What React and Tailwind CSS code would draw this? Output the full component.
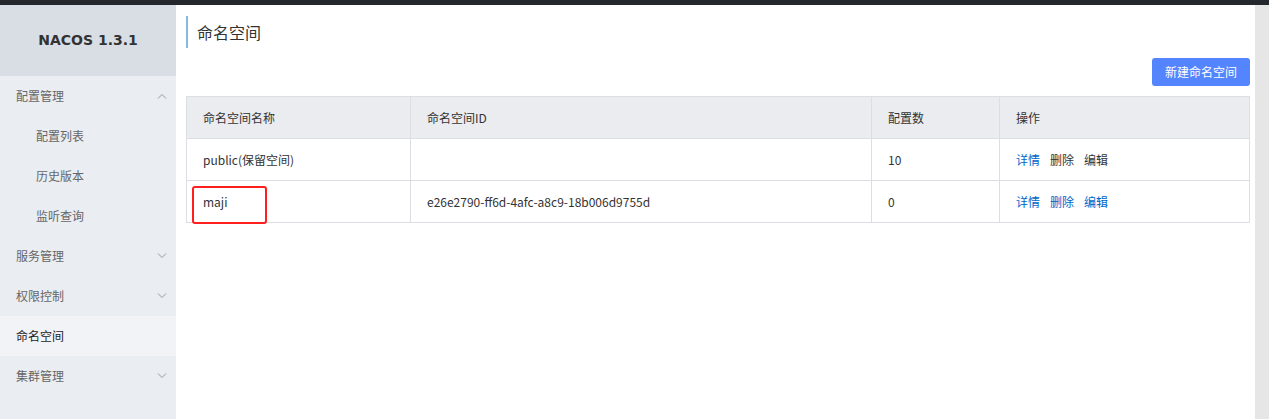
import * as React from "react";

const FONT = { fontFamily: '"Noto Sans CJK SC", "Noto Sans", sans-serif' };

const Chevron = ({ up }) => (
  <svg width="10" height="6" viewBox="0 0 10 6" className="text-[#999]">
    <path
      d={up ? "M1 5.5 L5 1.5 L9 5.5" : "M1 0.5 L5 4.5 L9 0.5"}
      fill="none"
      stroke="currentColor"
      strokeWidth="1"
    />
  </svg>
);

const menu = [
  { label: "配置管理", chevron: "up" },
  { label: "配置列表", sub: true },
  { label: "历史版本", sub: true },
  { label: "监听查询", sub: true },
  { label: "服务管理", chevron: "down" },
  { label: "权限控制", chevron: "down" },
  { label: "命名空间", active: true },
  { label: "集群管理", chevron: "down" },
];

const rows = [
  { name: "public(保留空间)", id: "", count: "10", del: false },
  { name: "maji", id: "e26e2790-ff6d-4afc-a8c9-18b006d9755d", count: "0", del: true, mark: true },
];

export default function App() {
  return (
    <div className="w-[1269px] h-[419px] overflow-hidden flex flex-col bg-white" style={FONT}>
      <div className="h-[5px] bg-[#24272c] shrink-0" />
      <div className="flex flex-1 min-h-0">
        <aside className="w-[176px] shrink-0 bg-[#eaedf1] flex flex-col">
          <div className="h-[71px] bg-[#d9dee4] flex items-center justify-center text-[15px] font-bold text-[#333]" style={{ fontFamily: '"DejaVu Sans", sans-serif', fontSize: 14 }}>
            NACOS 1.3.1
          </div>
          {menu.map((m) => (
            <div
              key={m.label}
              className={`h-[40px] flex items-center justify-between pr-[9px] text-[12px] ${
                m.sub ? "pl-[36px]" : "pl-[16px]"
              } ${m.active ? "bg-[#f2f3f7] text-[#222]" : "text-[#666]"}`}
            >
              <span>{m.label}</span>
              {m.chevron && <Chevron up={m.chevron === "up"} />}
            </div>
          ))}
        </aside>
        <main className="flex-1 pl-[10px] pr-[5px] pt-[11px]">
          <div className="h-[32px] border-l-2 border-[#88b7e0] pl-[9px] flex items-center text-[16px] text-[#333]">
            命名空间
          </div>
          <div className="flex justify-end mt-[10px]">
            <button className="h-[28px] w-[98px] rounded-[3px] bg-[#5584ff] text-white text-[12px]">
              新建命名空间
            </button>
          </div>
          <table className="mt-[10px] w-[1064px] border-collapse text-[12px] text-[#333]">
            <thead>
              <tr className="bg-[#ebecf0] h-[42px]">
                <th className="w-[224px] border border-[#dcdee3] text-left font-normal pl-[16px]">命名空间名称</th>
                <th className="w-[461px] border border-[#dcdee3] text-left font-normal pl-[16px]">命名空间ID</th>
                <th className="w-[128px] border border-[#dcdee3] text-left font-normal pl-[16px]">配置数</th>
                <th className="border border-[#dcdee3] text-left font-normal pl-[16px]">操作</th>
              </tr>
            </thead>
            <tbody>
              {rows.map((r) => (
                <tr key={r.name} className="h-[42px]">
                  <td className="border border-[#dcdee3] pl-[16px] relative">
                    {r.mark && (
                      <div className="absolute left-[5px] top-[5px] w-[75px] h-[38px] border-[2px] border-[#ff1f1f] rounded-[3px]" />
                    )}
                    {r.name}
                  </td>
                  <td className="border border-[#dcdee3] pl-[16px]">{r.id}</td>
                  <td className="border border-[#dcdee3] pl-[16px]">{r.count}</td>
                  <td className="border border-[#dcdee3] pl-[16px]">
                    <span className="text-[#0064c8]">详情</span>
                    <span className={`ml-[10px] ${r.del ? "text-[#0064c8]" : "text-[#333]"}`}>删除</span>
                    <span className={`ml-[10px] ${r.del ? "text-[#0064c8]" : "text-[#333]"}`}>编辑</span>
                  </td>
                </tr>
              ))}
            </tbody>
          </table>
        </main>
        <div className="w-[14px] shrink-0 bg-[#e6e6e6]" />
      </div>
    </div>
  );
}
